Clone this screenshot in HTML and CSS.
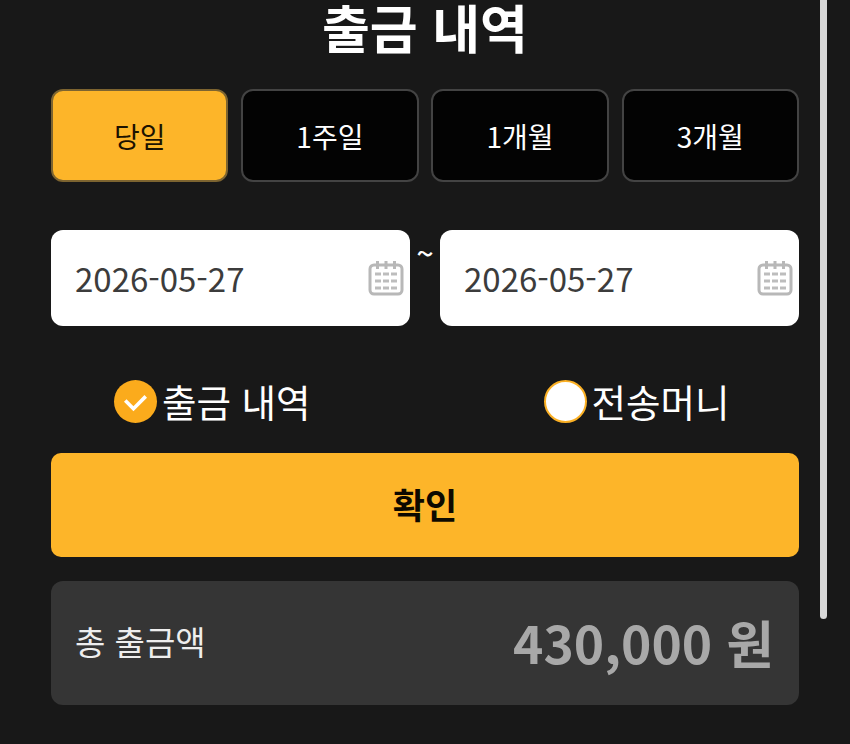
FILE: index.html
```html
<!DOCTYPE html>
<html lang="ko">
<head>
  <meta charset="UTF-8">
  <meta name="viewport" content="width=device-width, initial-scale=1.0">
  <title>출금 내역</title>
  <link rel="stylesheet" href="styles.css">
</head>
<body>
  <main class="page">
    <h1 class="title">출금 내역</h1>

    <!-- 기간 버튼 -->
    <div class="periods">
      <button class="period active">당일</button>
      <button class="period">1주일</button>
      <button class="period">1개월</button>
      <button class="period">3개월</button>
    </div>

    <!-- 날짜 선택 -->
    <div class="dates">
      <div class="date-box">
        <span>2026-05-27</span>
        <svg class="cal" viewBox="0 0 36 36"><use href="#cal-icon"/></svg>
      </div>
      <span class="tilde">~</span>
      <div class="date-box">
        <span>2026-05-27</span>
        <svg class="cal" viewBox="0 0 36 36"><use href="#cal-icon"/></svg>
      </div>
    </div>

    <!-- 종류 선택 -->
    <div class="types">
      <label class="type type-left">
        <span class="radio checked">
          <svg viewBox="0 0 42 42"><path d="M11 20l8 8 12-12" fill="none" stroke="#fff" stroke-width="3.500"/></svg>
        </span>
        <span class="type-text">출금 내역</span>
      </label>
      <label class="type type-right">
        <span class="radio"></span>
        <span class="type-text">전송머니</span>
      </label>
    </div>

    <button class="confirm">확인</button>

    <div class="total">
      <span class="total-label">총 출금액</span>
      <span class="total-value">430,000 원</span>
    </div>
  </main>

  <div class="scrollbar"></div>

  <svg class="defs" width="0" height="0">
    <symbol id="cal-icon" viewBox="0 0 36 36">
      <rect x="2" y="5" width="32" height="29" rx="4" fill="none" stroke="#b8b8b8" stroke-width="3"/>
      <path d="M9.500 1v8M18 1v8M26.500 1v8" stroke="#b8b8b8" stroke-width="3" fill="none"/>
      <path d="M7 14h6M15 14h6M23 14h6M7 21h6M15 21h6M23 21h6M7 28h6M15 28h6M23 28h6" stroke="#bdbdbd" stroke-width="3" fill="none"/>
    </symbol>
  </svg>
</body>
</html>
```

FILE: styles.css
```css
* {
  margin: 0;
  padding: 0;
  box-sizing: border-box;
}
html, body {
  height: 100%;
  overflow: hidden;
}
body {
  background: #181818;
  color: #fff;
  font-family: "Noto Sans CJK KR", "Noto Sans", sans-serif;
}
button {
  font-family: inherit;
  cursor: pointer;
}

.page {
  width: 850px;
  padding: 0 51px;
  display: flex;
  flex-direction: column;
}

.title {
  height: 89px;
  font-size: 52px;
  font-weight: 700;
  line-height: 54px;
  text-align: center;
}

/* 기간 버튼 */
.periods {
  display: grid;
  grid-template-columns: repeat(4, 1fr);
  gap: 12.800px;
}
.period {
  height: 93px;
  background: #030303;
  color: #fff;
  border: 2px solid #434343;
  border-radius: 12px;
  font-size: 28px;
  font-weight: 400;
}
.period.active {
  background: #fdb529;
  border-color: #7d6430;
  color: #1c1200;
}

/* 날짜 */
.dates {
  margin-top: 48px;
  display: flex;
  align-items: stretch;
}
.date-box {
  flex: 1;
  height: 96px;
  padding: 0 6px 0 24px;
  background: #fff;
  border-radius: 12px;
  color: #3c3c3c;
  font-size: 33px;
  display: flex;
  align-items: center;
  justify-content: space-between;
}
.cal {
  width: 36px;
  height: 36px;
}
.tilde {
  width: 30px;
  margin-top: 6px;
  font-size: 30px;
  font-weight: 500;
  line-height: 32px;
  text-align: center;
}
.defs {
  position: absolute;
}

/* 종류 */
.types {
  height: 127px;
  padding-bottom: 30px;
  display: flex;
  align-items: flex-end;
}
.type {
  display: flex;
  align-items: center;
  gap: 5px;
  font-size: 37.500px;
  line-height: 44px;
}
.type-left {
  margin-left: 63px;
}
.type-right {
  margin-left: 233px;
}
.radio {
  width: 43px;
  height: 43px;
  border-radius: 50%;
  background: #fff;
  border: 2px solid #fbb024;
  flex-shrink: 0;
}
.radio.checked {
  background: #fbab1c;
  border: 0;
}
.radio svg {
  display: block;
  width: 100%;
  height: 100%;
}

.confirm {
  height: 104px;
  padding-bottom: 4px;
  background: #fdb529;
  color: #0d0900;
  border: 0;
  border-radius: 10px;
  font-size: 35px;
  font-weight: 700;
}

.total {
  margin-top: 24px;
  height: 124px;
  padding: 0 25px 4px 24px;
  background: #353535;
  border-radius: 12px;
  display: flex;
  align-items: center;
  justify-content: space-between;
}
.total-label {
  font-size: 33px;
  color: #eee;
}
.total-value {
  font-size: 51.500px;
  font-weight: 700;
  color: #a8a8a8;
}

/* 스크롤바 */
.scrollbar {
  position: absolute;
  top: 0;
  left: 820px;
  width: 7px;
  height: 619px;
  background: #d8d8d8;
  border-radius: 0 0 4px 4px;
}
```
